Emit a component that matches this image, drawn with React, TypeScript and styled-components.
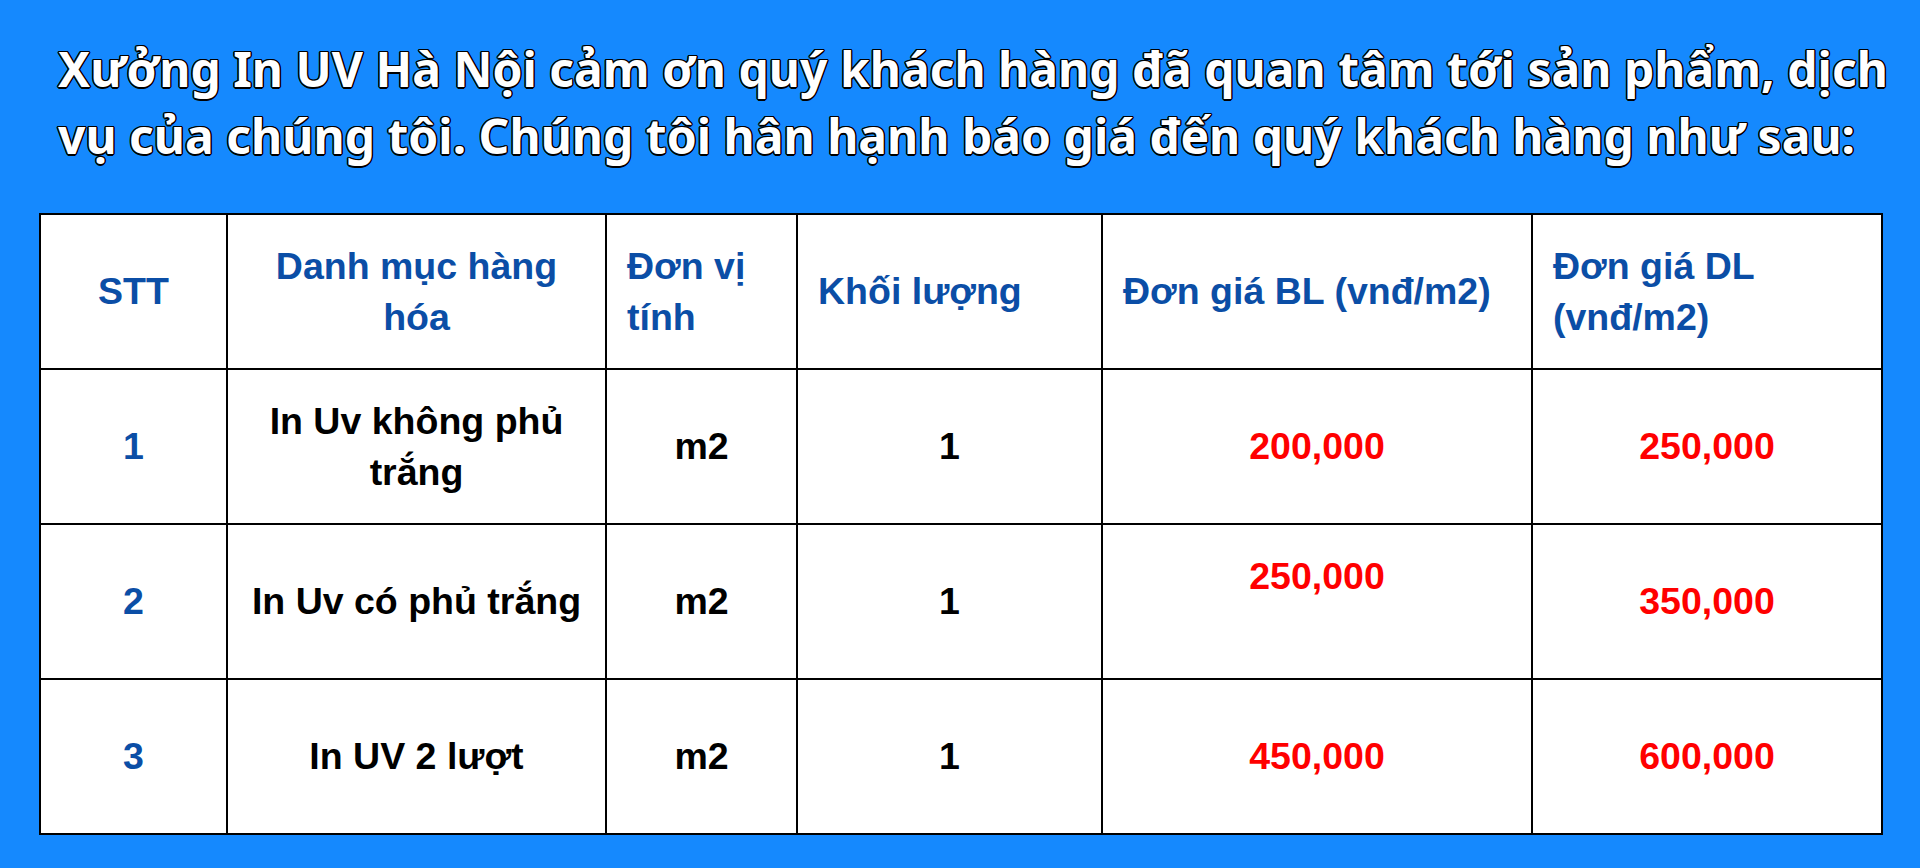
import React from "react";
import styled, { createGlobalStyle } from "styled-components";

const GlobalStyle = createGlobalStyle`
	html, body {
		margin: 0;
		padding: 0;
		background: #1589fe;
	}
`;

const Page = styled.div`
	min-height: 868px;
	background: #1589fe;
	padding: 35px 0 0 0;
	box-sizing: border-box;
`;

const Intro = styled.h1`
	margin: 0 12px 44px 58px;
	font-family: "Noto Sans", "Open Sans", sans-serif;
	font-weight: 700;
	font-size: 48px;
	line-height: 67px;
	color: #ffffff;
	text-shadow:
		1.5px 0 0 #000,
		-1.5px 0 0 #000,
		0 1.5px 0 #000,
		0 -1.5px 0 #000,
		1px 1px 0 #000,
		-1px -1px 0 #000,
		1px -1px 0 #000,
		-1px 1px 0 #000;
`;

const PriceTable = styled.table`
	width: 1842px;
	margin: 0 39px;
	border-collapse: collapse;
	table-layout: fixed;
	background: #ffffff;
	font-family: "Liberation Sans", Arial, sans-serif;
	font-weight: 700;
	font-size: 37.5px;
	line-height: 51px;
`;

const Head = styled.th<{ $left?: boolean }>`
	height: 153px;
	border: 2px solid #000;
	padding: 0 20px;
	color: #0b4ea6;
	font-weight: 700;
	text-align: ${(p) => (p.$left ? "left" : "center")};
	vertical-align: middle;
`;

type Tone = "blue" | "black" | "red";

const tones: Record<Tone, string> = {
	blue: "#0b4ea6",
	black: "#000000",
	red: "#ff0000",
};

const Cell = styled.td<{ $tone: Tone }>`
	height: 153px;
	border: 2px solid #000;
	padding: 0 20px;
	color: ${(p) => tones[p.$tone]};
	text-align: center;
	vertical-align: middle;
`;

interface Row {
	stt: string;
	name: string;
	unit: string;
	qty: string;
	bl: string;
	dl: string;
	blRaised?: boolean;
}

const rows: Row[] = [
	{ stt: "1", name: "In Uv không phủ trắng", unit: "m2", qty: "1", bl: "200,000", dl: "250,000" },
	{ stt: "2", name: "In Uv có phủ trắng", unit: "m2", qty: "1", bl: "250,000", dl: "350,000", blRaised: true },
	{ stt: "3", name: "In UV 2 lượt", unit: "m2", qty: "1", bl: "450,000", dl: "600,000" },
];

const App: React.FC = () => {
	return (
		<>
			<GlobalStyle />
			<Page>
				<Intro>
					Xưởng In UV Hà Nội cảm ơn quý khách hàng đã quan tâm tới sản phẩm, dịch vụ của chúng tôi. Chúng tôi
					hân hạnh báo giá đến quý khách hàng như sau:
				</Intro>
				<PriceTable>
					<colgroup>
						<col style={{ width: 187 }} />
						<col style={{ width: 379 }} />
						<col style={{ width: 191 }} />
						<col style={{ width: 305 }} />
						<col style={{ width: 430 }} />
						<col style={{ width: 350 }} />
					</colgroup>
					<thead>
						<tr>
							<Head>STT</Head>
							<Head>Danh mục hàng hóa</Head>
							<Head $left>Đơn vị tính</Head>
							<Head $left>Khối lượng</Head>
							<Head $left>Đơn giá BL (vnđ/m2)</Head>
							<Head $left>Đơn giá DL (vnđ/m2)</Head>
						</tr>
					</thead>
					<tbody>
						{rows.map((r) => (
							<tr key={r.stt}>
								<Cell $tone="blue">{r.stt}</Cell>
								<Cell $tone="black">{r.name}</Cell>
								<Cell $tone="black">{r.unit}</Cell>
								<Cell $tone="black">{r.qty}</Cell>
								<Cell $tone="red">
									{r.bl}
									{r.blRaised && (
										<>
											<br />
											{"\u00a0"}
										</>
									)}
								</Cell>
								<Cell $tone="red">{r.dl}</Cell>
							</tr>
						))}
					</tbody>
				</PriceTable>
			</Page>
		</>
	);
};

export default App;
